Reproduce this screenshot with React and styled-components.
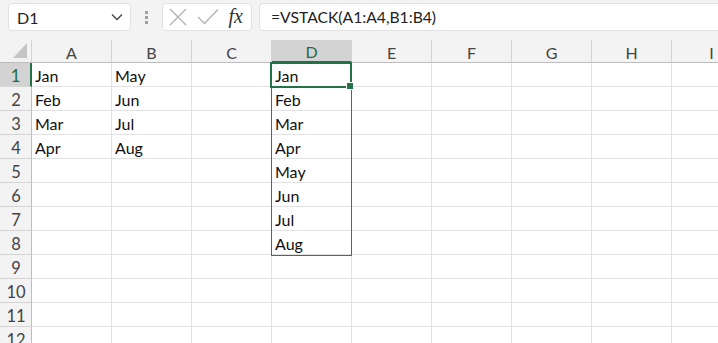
import { styled, createGlobalStyle } from "styled-components";

const GlobalStyle = createGlobalStyle`
  html, body {
    margin: 0;
    padding: 0;
    background: #f3f3f3;
  }
`;

const columns = ["A", "B", "C", "D", "E", "F", "G", "H", "I"];
const rowCount = 12;

const cellData = {
  "A1": "Jan", "A2": "Feb", "A3": "Mar", "A4": "Apr",
  "B1": "May", "B2": "Jun", "B3": "Jul", "B4": "Aug",
  "D1": "Jan", "D2": "Feb", "D3": "Mar", "D4": "Apr",
  "D5": "May", "D6": "Jun", "D7": "Jul", "D8": "Aug",
};

export default function App() {
  const rows = Array.from({ length: rowCount }, (_, i) => i + 1);
  return (
    <Page>
      <GlobalStyle />
      <FormulaBar>
        <NameBox>
          <span>D1</span>
          <svg width="12" height="8" viewBox="0 0 12 8">
            <path d="M1 1.5 L6 6.5 L11 1.5" fill="none" stroke="#444" strokeWidth="1.3" />
          </svg>
        </NameBox>
        <Grip>
          <i />
          <i />
          <i />
        </Grip>
        <FxBox>
          <svg width="18" height="18" viewBox="0 0 18 18">
            <path d="M1 1 L17 17 M17 1 L1 17" stroke="#b3b3b3" strokeWidth="1.4" fill="none" />
          </svg>
          <svg width="22" height="18" viewBox="0 0 22 18">
            <path d="M1 9 L7.5 15.5 L21 1.5" stroke="#b3b3b3" strokeWidth="1.4" fill="none" />
          </svg>
          <FxLabel>fx</FxLabel>
        </FxBox>
        <FormulaInput>=VSTACK(A1:A4,B1:B4)</FormulaInput>
      </FormulaBar>

      <Sheet>
        <Corner>
          <svg width="16" height="17" viewBox="0 0 16 17">
            <path d="M15 1 L15 16 L1 16 Z" fill="#c4c4c4" />
          </svg>
        </Corner>
        {columns.map((c) => (
          <ColHeader key={c} $active={c === "D"}>{c}</ColHeader>
        ))}
        {rows.map((r) => [
          <RowHeader key={"h" + r} $active={r === 1}>{r}</RowHeader>,
          ...columns.map((c) => (
            <Cell key={c + r}>{cellData[c + r] || ""}</Cell>
          )),
        ])}
        <SpillRange />
        <ActiveCell>
          <FillHandle />
        </ActiveCell>
      </Sheet>
    </Page>
  );
}

const Page = styled.div`
  width: 718px;
  height: 343px;
  overflow: hidden;
  background: #f3f3f3;
  font-family: "Lato", "Noto Sans", sans-serif;
  color: #222;
`;

const FormulaBar = styled.div`
  height: 28px;
  padding: 3px 0 9px 8px;
  display: flex;
  align-items: center;
`;

const Box = styled.div`
  height: 28px;
  box-sizing: border-box;
  background: #fff;
  border: 1px solid #e2e2e2;
  border-radius: 4px;
  display: flex;
  align-items: center;
`;

const NameBox = styled(Box)`
  width: 123px;
  padding: 0 7px 0 8px;
  justify-content: space-between;
  font-size: 16px;
`;

const Grip = styled.div`
  width: 31px;
  display: flex;
  flex-direction: column;
  align-items: center;
  gap: 2px;
  i {
    display: block;
    width: 3px;
    height: 3px;
    background: #a0a0a0;
  }
`;

const FxBox = styled(Box)`
  width: 90px;
  padding: 0 6px 0 6px;
  justify-content: space-between;
`;

const FxLabel = styled.span`
  font-family: "Liberation Serif", "DejaVu Serif", serif;
  font-style: italic;
  font-size: 20px;
  color: #333;
  padding-right: 2px;
  margin-top: -2px;
`;

const FormulaInput = styled(Box)`
  flex: 1;
  margin-left: 7px;
  border-right: none;
  border-radius: 4px 0 0 4px;
  padding-left: 11px;
  font-size: 15.7px;
`;

const Sheet = styled.div`
  position: relative;
  display: grid;
  grid-template-columns: 32px repeat(9, 80px);
  grid-template-rows: 23px repeat(12, 24px);
  background: #fff;
`;

const Corner = styled.div`
  background: #f3f3f3;
  border-right: 1px solid #d4d4d4;
  border-bottom: 1px solid #bdbdbd;
  display: flex;
  align-items: flex-end;
  justify-content: flex-end;
  padding: 0 3px 3px 0;
  box-sizing: border-box;
`;

const ColHeader = styled.div`
  box-sizing: border-box;
  background: ${(p) => (p.$active ? "#d3d3d3" : "#f3f3f3")};
  color: ${(p) => (p.$active ? "#1e6b3e" : "#444")};
  border-right: 1px solid #d4d4d4;
  border-bottom: ${(p) => (p.$active ? "2px solid #217346" : "1px solid #bdbdbd")};
  display: flex;
  align-items: center;
  justify-content: center;
  font-size: 16px;
  padding-top: 2px;
`;

const RowHeader = styled.div`
  box-sizing: border-box;
  background: ${(p) => (p.$active ? "#d3d3d3" : "#f3f3f3")};
  color: ${(p) => (p.$active ? "#1e6b3e" : "#444")};
  border-right: ${(p) => (p.$active ? "2px solid #217346" : "1px solid #bdbdbd")};
  border-bottom: 1px solid #d4d4d4;
  display: flex;
  align-items: center;
  justify-content: center;
  font-size: 16.5px;
  padding: 2px 0 0 1px;
`;

const Cell = styled.div`
  box-sizing: border-box;
  border-right: 1px solid #e1e1e1;
  border-bottom: 1px solid #e1e1e1;
  display: flex;
  align-items: flex-end;
  padding: 0 0 1px 3px;
  font-size: 16px;
  color: #111;
  white-space: nowrap;
`;

const SpillRange = styled.div`
  position: absolute;
  left: 271px;
  top: 23px;
  width: 81px;
  height: 193px;
  box-sizing: border-box;
  border: 1px solid #3f639c;
  pointer-events: none;
`;

const ActiveCell = styled.div`
  position: absolute;
  left: 270px;
  top: 22px;
  width: 82px;
  height: 26px;
  box-sizing: border-box;
  border: 2px solid #217346;
  pointer-events: none;
`;

const FillHandle = styled.div`
  position: absolute;
  right: -4px;
  bottom: -4px;
  width: 6px;
  height: 6px;
  background: #217346;
  border: 1px solid #fff;
`;
